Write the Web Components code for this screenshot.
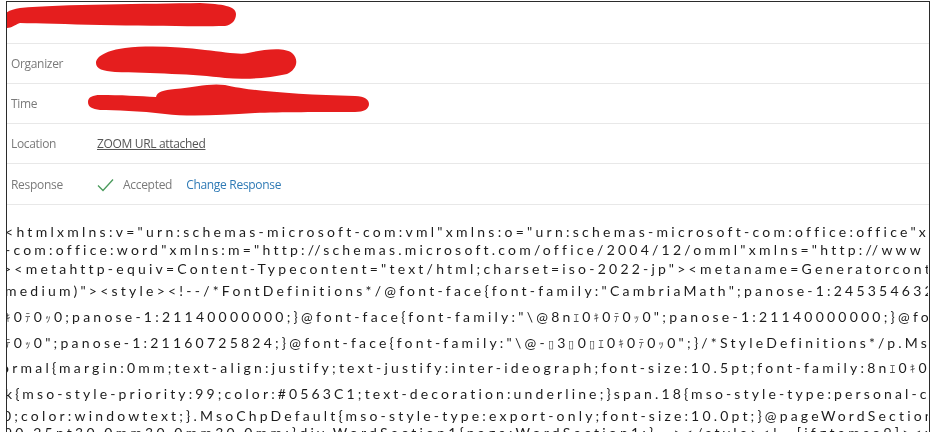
<!DOCTYPE html>
<html>
<head>
<meta charset="utf-8">
<style>
    html, body { margin: 0; padding: 0; background: #fff; }
    body { width: 930px; height: 432px; overflow: hidden; }
</style>
</head>
<body>
<mail-frame>
    <meta-row label="" first></meta-row>
    <meta-row label="Organizer"></meta-row>
    <meta-row label="Time"></meta-row>
    <meta-row label="Location"><a class="zoom">ZOOM URL attached</a></meta-row>
    <response-row></response-row>
    <source-view>
        <source-line h="18" shift="2" ls="3.26">&lt;htmlxmlns:v="urn:schemas-microsoft-com:vml"xmlns:o="urn:schemas-microsoft-com:office:office"xmlns:x</source-line>
        <source-line h="19" shift="2">-com:office:word"xmlns:m="http://schemas.microsoft.com/office/2004/12/omml"xmlns="http://www</source-line>
        <source-line h="22" shift="4">&gt;&lt;metahttp-equiv=Content-Typecontent="text/html;charset=iso-2022-jp"&gt;&lt;metaname=Generatorcont</source-line>
        <source-line h="26" shift="2">medium)"&gt;&lt;style&gt;&lt;!--/*FontDefinitions*/@font-face{font-family:"CambriaMath";panose-1:245354632</source-line>
        <source-line h="26" shift="2"><span class="k">ｷ</span>0<span class="k">ﾃ</span>0<span class="k">ｯ</span>0;panose-1:21140000000;}@font-face{font-family:"\@8n<span class="k">ｴ</span>0<span class="k">ｷ</span>0<span class="k">ﾃ</span>0<span class="k">ｯ</span>0";panose-1:21140000000;}@fo</source-line>
        <source-line h="25" shift="2"><span class="k">ﾃ</span>0<span class="k">ｯ</span>0";panose-1:21160725824;}@font-face{font-family:"\@-<span class="k">▯</span>3<span class="k">▯</span>0<span class="k">▯ｴ</span>0<span class="k">ｷ</span>0<span class="k">ﾃ</span>0<span class="k">ｯ</span>0";}/*StyleDefinitions*/p.Mso</source-line>
        <source-line h="26" shift="6">ormal{margin:0mm;text-align:justify;text-justify:inter-ideograph;font-size:10.5pt;font-family:8n<span class="k">ｴ</span>0<span class="k">ｷ</span>0</source-line>
        <source-line h="22" shift="2" ls="3.14">k{mso-style-priority:99;color:#0563C1;text-decoration:underline;}span.18{mso-style-type:personal-c</source-line>
        <source-line h="17" shift="4" ls="3.17">0;color:windowtext;}.MsoChpDefault{mso-style-type:export-only;font-size:10.0pt;}@pageWordSection</source-line>
        <source-line h="19" shift="3">90.25pt30.0mm30.0mm30.0mm;}div.WordSection1{page:WordSection1;}--&gt;&lt;/style&gt;&lt;!--[ifgtemso9]&gt;&lt;x</source-line>
    </source-view>
    <red-marks></red-marks>
</mail-frame>

<script>
class MailFrame extends HTMLElement {
    constructor() {
        super();
        this.attachShadow({ mode: "open" });
        this.shadowRoot.innerHTML = `
            <style>
                :host {
                    display: block;
                    position: relative;
                    box-sizing: border-box;
                    width: 924px;
                    height: 431px;
                    margin: 1px 0 0 6px;
                    border: solid #2b2b2b;
                    border-width: 1px 1px 0 1px;
                    overflow: hidden;
                    font-family: "Open Sans", "Noto Sans", sans-serif;
                    color: #6f6f6f;
                    filter: blur(0.35px);
                }
            </style>
            <slot></slot>
        `;
    }
}

class MetaRow extends HTMLElement {
    constructor() {
        super();
        this.attachShadow({ mode: "open" });
        this.shadowRoot.innerHTML = `
            <style>
                :host {
                    display: flex;
                    align-items: center;
                    box-sizing: border-box;
                    height: 40px;
                    padding-left: 4px;
                    border-bottom: 1px solid #e8e8e8;
                    font-size: 12px;
                    letter-spacing: -0.33px;
                }
                :host([first]) { height: 42px; }
                .label { width: 86px; flex: none; color: #7a7a7a; }
                ::slotted(.zoom) {
                    color: #555;
                    text-decoration: underline;
                    font-size: 12px;
                }
            </style>
            <span class="label"></span>
            <slot></slot>
        `;
        this.shadowRoot.querySelector(".label").textContent = this.getAttribute("label");
    }
}

class ResponseRow extends HTMLElement {
    constructor() {
        super();
        this.attachShadow({ mode: "open" });
        this.shadowRoot.innerHTML = `
            <style>
                :host {
                    display: flex;
                    align-items: center;
                    box-sizing: border-box;
                    height: 41px;
                    padding: 1px 0 0 4px;
                    border-bottom: 1px solid #e8e8e8;
                    font-size: 12px;
                    letter-spacing: -0.3px;
                }
                .label { width: 86px; flex: none; color: #7a7a7a; }
                svg { flex: none; margin-right: 9px; }
                .state { color: #7a7a7a; margin-right: 14px; }
                .link { color: #2f7ab5; }
            </style>
            <span class="label">Response</span>
            <svg width="17" height="14" viewBox="0 0 17 14">
                <path d="M1 7.5 L6 12.5 L16 1.5" fill="none" stroke="#4a9a5c" stroke-width="1.3"/>
            </svg>
            <span class="state">Accepted</span>
            <span class="link">Change Response</span>
        `;
    }
}

class SourceView extends HTMLElement {
    constructor() {
        super();
        this.attachShadow({ mode: "open" });
        this.shadowRoot.innerHTML = `
            <style>
                :host {
                    display: block;
                    padding-top: 17px;
                    margin-right: 1px;
                    font-family: "Lato", "Noto Sans CJK JP", sans-serif;
                    font-size: 14px;
                    letter-spacing: 3.22px;
                    color: #1c1c1c;
                }
            </style>
            <slot></slot>
        `;
    }
}

class SourceLine extends HTMLElement {
    constructor() {
        super();
        this.attachShadow({ mode: "open" });
        this.shadowRoot.innerHTML = `
            <style>
                :host {
                    display: block;
                    white-space: nowrap;
                    overflow: hidden;
                    line-height: 19px;
                }
                ::slotted(.k) {
                    font-size: 11px;
                    color: #444;
                }
            </style>
            <slot></slot>
        `;
        this.style.height = this.getAttribute("h") + "px";
        this.style.textIndent = -Number(this.getAttribute("shift")) + "px";
        if (this.hasAttribute("ls")) this.style.letterSpacing = this.getAttribute("ls") + "px";
    }
}

class RedMarks extends HTMLElement {
    constructor() {
        super();
        this.attachShadow({ mode: "open" });
        this.shadowRoot.innerHTML = `
            <style>
                :host {
                    position: absolute;
                    left: -7px;
                    top: -2px;
                    width: 930px;
                    height: 432px;
                    pointer-events: none;
                }
                svg { display: block; overflow: visible; }
            </style>
            <svg width="930" height="432" viewBox="0 0 930 432" fill="#e51e1e">
                <path d="M2 19 C4 12 10 10 20 8 C60 4 150 4 200 3 C222 4 236 6 236 14 C236 20 232 25 225 26 C170 27 60 24 20 23 C14 25 12 28 7 28 C3 28 1 23 2 19Z"/>
                <path d="M96 63 C96 56 108 50 125 48 C150 45 180 47 205 50 C225 52 240 55 248 53 C265 49 285 47 292 53 C300 60 296 70 287 74 C270 78 245 80 225 78 C195 74 150 73 115 72 C103 71 96 69 96 63Z"/>
                <path d="M88 102 C88 97 93 95 100 95 C120 95 140 96 156 97 C157 92 163 90 175 89 C195 87 210 83 225 85 C250 91 300 95 355 96 C365 96 369 100 369 104 C369 109 364 112 355 112 C320 112 280 112 255 113 C220 115 190 117 165 114 C140 111 115 110 100 110 C92 109 88 107 88 102Z"/>
            </svg>
        `;
    }
}

customElements.define("mail-frame", MailFrame);
customElements.define("meta-row", MetaRow);
customElements.define("response-row", ResponseRow);
customElements.define("source-view", SourceView);
customElements.define("source-line", SourceLine);
customElements.define("red-marks", RedMarks);
</script>
</body>
</html>
